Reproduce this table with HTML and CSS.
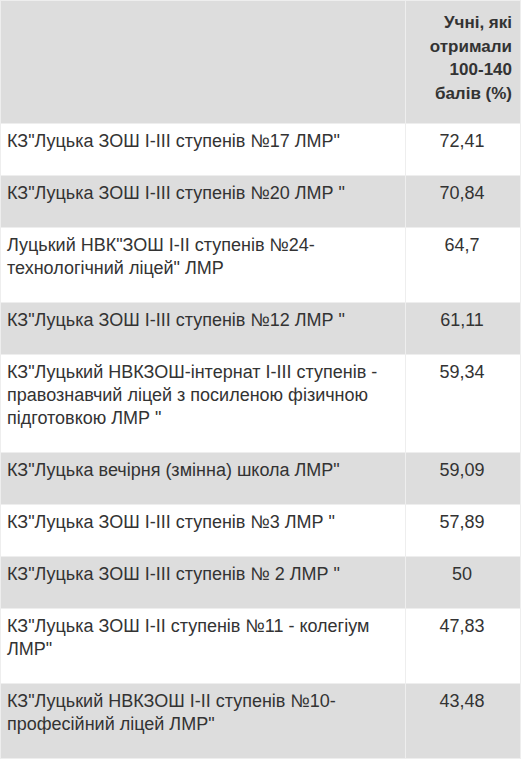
FILE: index.html
```html
<!DOCTYPE html>
<html lang="uk">
<head>
<meta charset="utf-8">
<title>Таблиця</title>
<link rel="stylesheet" href="styles.css">
</head>
<body>
<table class="results">
  <thead>
    <tr class="row-gray">
      <th class="name-cell"></th>
      <th class="head-cell">Учні, які отримали 100-140 балів (%)</th>
    </tr>
  </thead>
  <tbody>
    <tr class="row-white"><td class="name-cell">КЗ"Луцька ЗОШ І-ІІІ ступенів №17 ЛМР"</td><td class="num-cell">72,41</td></tr>
    <tr class="row-gray"><td class="name-cell">КЗ"Луцька ЗОШ І-ІІІ ступенів №20 ЛМР "</td><td class="num-cell">70,84</td></tr>
    <tr class="row-white"><td class="name-cell">Луцький НВК"ЗОШ І-ІІ ступенів №24-технологічний ліцей" ЛМР</td><td class="num-cell">64,7</td></tr>
    <tr class="row-gray"><td class="name-cell">КЗ"Луцька ЗОШ І-ІІІ ступенів №12 ЛМР "</td><td class="num-cell">61,11</td></tr>
    <tr class="row-white"><td class="name-cell">КЗ"Луцький НВКЗОШ-інтернат І-ІІІ ступенів - правознавчий ліцей з посиленою фізичною підготовкою ЛМР "</td><td class="num-cell">59,34</td></tr>
    <tr class="row-gray"><td class="name-cell">КЗ"Луцька вечірня (змінна) школа ЛМР"</td><td class="num-cell">59,09</td></tr>
    <tr class="row-white"><td class="name-cell">КЗ"Луцька ЗОШ І-ІІІ ступенів №3 ЛМР "</td><td class="num-cell">57,89</td></tr>
    <tr class="row-gray"><td class="name-cell">КЗ"Луцька ЗОШ І-ІІІ ступенів № 2 ЛМР "</td><td class="num-cell">50</td></tr>
    <tr class="row-white"><td class="name-cell">КЗ"Луцька ЗОШ І-ІІ ступенів №11 - колегіум ЛМР"</td><td class="num-cell">47,83</td></tr>
    <tr class="row-gray"><td class="name-cell">КЗ"Луцький НВКЗОШ І-ІІ ступенів №10-професійний ліцей ЛМР"</td><td class="num-cell">43,48</td></tr>
  </tbody>
</table>
</body>
</html>
```

FILE: styles.css
```css
html, body {
  margin: 0;
  padding: 0;
  background: #ffffff;
}

body {
  font-family: "Liberation Sans", Arial, sans-serif;
  font-size: 18px;
  line-height: 23px;
  color: #333333;
}

.results {
  width: 521px;
  border-collapse: collapse;
  table-layout: fixed;
}

.results th,
.results td {
  border: 1px solid #eeeeee;
  vertical-align: top;
  padding: 6px 8px 22px 6px;
}

.results .name-cell {
  width: 390px;
}

.row-gray {
  background: #dddddd;
}

.row-white {
  background: #ffffff;
}

.results .head-cell {
  text-align: right;
  font-size: 17px;
  font-weight: bold;
  line-height: 23.5px;
  padding-top: 10px;
  padding-bottom: 18px;
}

.num-cell {
  text-align: center;
}
```
